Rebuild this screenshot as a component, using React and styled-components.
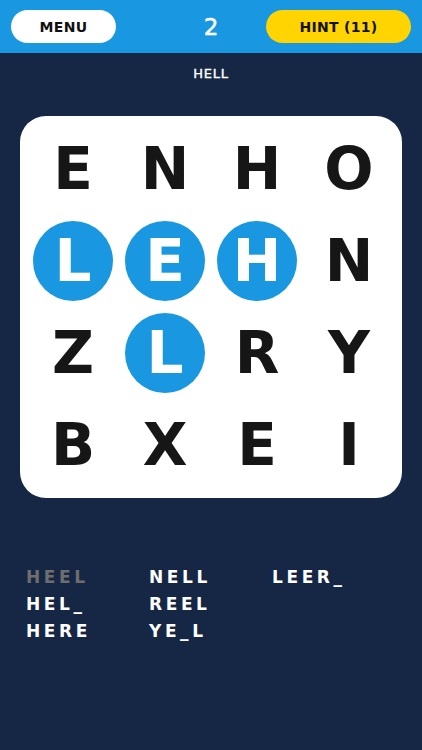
import React from 'react'
import styled, { createGlobalStyle } from 'styled-components'

const GlobalStyle = createGlobalStyle`
  html, body {
    margin: 0;
    padding: 0;
    background: #152744;
    font-family: "DejaVu Sans", "Noto Sans", sans-serif;
  }
`

const grid = [
  ['E', 'N', 'H', 'O'],
  ['L', 'E', 'H', 'N'],
  ['Z', 'L', 'R', 'Y'],
  ['B', 'X', 'E', 'I'],
]

const picked = ['1-0', '1-1', '1-2', '2-1']

const words = [
  { text: 'HEEL', found: true },
  { text: 'HEL_' },
  { text: 'HERE' },
  { text: 'NELL' },
  { text: 'REEL' },
  { text: 'YE_L' },
  { text: 'LEER_' },
]

const App = () => {
  return (
    <Page>
      <GlobalStyle />
      <TopBar>
        <PillButton $w={105}>MENU</PillButton>
        <Score>2</Score>
        <PillButton $w={145} $hint>HINT (11)</PillButton>
      </TopBar>

      <CurrentWord>HELL</CurrentWord>

      <Board>
        {grid.map((row, r) =>
          row.map((letter, c) => (
            <Cell key={`${r}-${c}`} $active={picked.includes(`${r}-${c}`)}>
              {letter}
            </Cell>
          ))
        )}
      </Board>

      <WordList>
        {words.map((w, i) => (
          <Word key={i} $found={w.found}>{w.text}</Word>
        ))}
      </WordList>
    </Page>
  )
}

export default App

const Page = styled.div`
  width: 422px;
  min-height: 750px;
  background: #152744;
`

const TopBar = styled.div`
  height: 53px;
  background: #1997e0;
  display: grid;
  grid-template-columns: 1fr auto 1fr;
  align-items: center;
  padding: 0 11px;
  box-sizing: border-box;
`

const PillButton = styled.div`
  width: ${p => p.$w}px;
  height: 33px;
  border-radius: 17px;
  justify-self: ${p => (p.$hint ? 'end' : 'start')};
  background: ${p => (p.$hint ? '#ffd400' : '#ffffff')};
  color: #111;
  display: flex;
  align-items: center;
  justify-content: center;
  font-weight: 700;
  font-size: 14px;
  letter-spacing: 0.3px;
`

const Score = styled.div`
  text-align: center;
  color: #fff;
  font-size: 23px;
  font-weight: 400;
  -webkit-text-stroke: 0.5px #fff;
`

const CurrentWord = styled.div`
  color: #fff;
  text-align: center;
  font-size: 13px;
  font-weight: 400;
  -webkit-text-stroke: 0.4px #fff;
  letter-spacing: 0.8px;
  margin-top: 11px;
  height: 19px;
  line-height: 19px;
`

const Board = styled.div`
  margin: 33px 20px 0;
  width: 382px;
  height: 382px;
  box-sizing: border-box;
  padding: 7px;
  background: #fff;
  border-radius: 26px;
  display: grid;
  grid-template-columns: repeat(4, 92px);
  grid-template-rows: repeat(4, 92px);
`

const Cell = styled.div`
  display: flex;
  align-items: center;
  justify-content: center;
  font-size: 58px;
  font-weight: 700;
  color: ${p => (p.$active ? '#fff' : '#161616')};
  position: relative;
  z-index: 0;

  &::before {
    content: '';
    display: ${p => (p.$active ? 'block' : 'none')};
    position: absolute;
    width: 80px;
    height: 80px;
    border-radius: 50%;
    background: #1997e0;
    z-index: -1;
  }
`

const WordList = styled.div`
  margin: 66px 0 0 26px;
  display: grid;
  grid-template-rows: repeat(3, 27px);
  grid-auto-flow: column;
  grid-auto-columns: 123px;
`

const Word = styled.div`
  font-size: 17px;
  font-weight: 700;
  letter-spacing: 3.6px;
  color: ${p => (p.$found ? '#6e6e6e' : '#fff')};
  line-height: 27px;
`
